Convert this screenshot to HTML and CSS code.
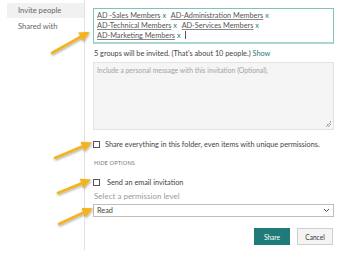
FILE: index.html
```html
<!DOCTYPE html>
<html lang="en">
<head>
  <meta charset="UTF-8">
  <title>Share - Invite people</title>
  <link rel="stylesheet" href="styles.css">
</head>
<body>
  <div class="share-dialog">
    <nav class="side-nav">
      <div class="nav-item active">Invite people</div>
      <div class="nav-item">Shared with</div>
    </nav>

    <main class="invite-panel">
      <div class="people-box">
        <span class="tag">AD -Sales Members</span><span class="tag-x">x</span>
        <span class="tag">AD-Administration Members</span><span class="tag-x">x</span><br>
        <span class="tag">AD-Technical Members</span><span class="tag-x">x</span>
        <span class="tag">AD-Services Members</span><span class="tag-x">x</span><br>
        <span class="tag">AD-Marketing Members</span><span class="tag-x">x</span>
        <span class="caret"></span>
      </div>

      <p class="invite-count">5 groups will be invited. (That's about 10 people.) <a href="#">Show</a></p>

      <div class="message-box">
        <span class="placeholder">Include a personal message with this invitation (Optional).</span>
        <span class="grip"></span>
      </div>

      <label class="check-row share-all">
        <span class="box"></span>
        Share everything in this folder, even items with unique permissions.
      </label>

      <div class="hide-options">HIDE OPTIONS</div>

      <label class="check-row email">
        <span class="box"></span>
        Send an email invitation
      </label>

      <div class="perm-label">Select a permission level</div>
      <div class="perm-select">
        <span>Read</span>
        <svg width="7" height="5" viewBox="0 0 7 5"><path d="M1 1 L3.5 3.5 L6 1" fill="none" stroke="#444" stroke-width="1"/></svg>
      </div>

      <div class="actions">
        <button class="btn primary">Share</button>
        <button class="btn">Cancel</button>
      </div>
    </main>

    <!-- callout arrows drawn over the dialog -->
    <svg class="arrows" width="341" height="256" viewBox="0 0 341 256">
      <defs>
        <filter id="shadow" x="-20%" y="-40%" width="140%" height="180%">
          <feDropShadow dx="0.6" dy="1.2" stdDeviation="0.8" flood-color="#000" flood-opacity="0.35"/>
        </filter>
        <marker id="head" markerWidth="4" markerHeight="4" refX="1.5" refY="2" orient="auto" markerUnits="strokeWidth">
          <path d="M0 0 L4 2 L0 4 Z" fill="#f2b31f"/>
        </marker>
      </defs>
      <g stroke="#f2b31f" stroke-width="2.6" stroke-linecap="round" filter="url(#shadow)" marker-end="url(#head)">
        <line x1="52" y1="53" x2="84" y2="35"/>
        <line x1="55" y1="158" x2="86" y2="145"/>
        <line x1="58" y1="193" x2="85" y2="182"/>
        <line x1="59" y1="224" x2="87" y2="211"/>
      </g>
    </svg>
  </div>
</body>
</html>
```

FILE: styles.css
```css
:root {
  --teal: #1e7b78;
  --teal-light: #7fc3bf;
  --text: #444;
  --muted: #9a9a9a;
  --border: #d9d9d9;
}

* {
  box-sizing: border-box;
  margin: 0;
  padding: 0;
}

body {
  font-family: 'Lato', 'Noto Sans', sans-serif;
  font-size: 7.3px;
  color: var(--text);
  background: #fff;
  width: 341px;
  height: 256px;
  overflow: hidden;
}

.share-dialog {
  position: relative;
  display: flex;
  height: 256px;
}

.side-nav {
  width: 85px;
  height: 250px;
  padding-top: 3px;
  border-right: 1px solid #e2e2e2;
}

.nav-item {
  margin-left: 7px;
  padding-left: 11px;
  height: 15px;
  line-height: 15px;
  color: #666;
  font-size: 7.6px;
}

.nav-item.active {
  background: #f1f1f1;
}

.nav-item + .nav-item {
  margin-top: 1px;
}

.invite-panel {
  width: 241px;
  margin-left: 8px;
  padding-top: 8px;
}

.people-box {
  height: 36px;
  padding: 2px 3px;
  border: 1px solid var(--teal-light);
  border-bottom: 2px solid #a9d6d3;
  line-height: 10px;
  font-size: 7.3px;
  white-space: nowrap;
}

.tag {
  color: #555;
  text-decoration: underline;
  text-decoration-color: #888;
}

.tag-x {
  color: var(--teal);
  margin-left: 2px;
  margin-right: 3px;
}

.caret {
  display: inline-block;
  width: 1px;
  height: 8px;
  background: #555;
  vertical-align: -1px;
}

.invite-count {
  margin-top: 3px;
  height: 15px;
  line-height: 13px;
  font-size: 7.3px;
  padding-left: 1px;
}

.invite-count a {
  color: var(--teal);
  text-decoration: none;
}

.message-box {
  position: relative;
  height: 68px;
  background: #f5f5f5;
  border: 1px solid #e3e3e3;
  padding: 3px 3px;
}

.placeholder {
  color: #a3a3a3;
  font-size: 6.8px;
}

.grip {
  position: absolute;
  right: 2px;
  bottom: 2px;
  width: 6px;
  height: 6px;
  background: linear-gradient(135deg, transparent 50%, #aaa 50%, #aaa 60%, transparent 60%, transparent 70%, #aaa 70%, #aaa 80%, transparent 80%);
}

.check-row {
  display: flex;
  align-items: center;
  gap: 5px;
  font-size: 7.3px;
  color: #444;
  height: 10px;
  white-space: nowrap;
}

.box {
  width: 7px;
  height: 7px;
  border: 1px solid #555;
  background: #fff;
  flex: none;
}

.share-all {
  margin-top: 9px;
}

.hide-options {
  margin-top: 10px;
  height: 8px;
  line-height: 8px;
  font-size: 5.6px;
  color: #777;
  letter-spacing: 0.15px;
  padding-left: 1px;
}

.email {
  margin-top: 10px;
  gap: 7px;
}

.perm-label {
  margin-top: 3px;
  font-size: 8px;
  color: var(--muted);
  height: 12px;
  line-height: 12px;
  padding-left: 1px;
}

.perm-select {
  margin-top: 2px;
  height: 13px;
  border: 1px solid #bdbdbd;
  display: flex;
  align-items: center;
  justify-content: space-between;
  padding: 0 3px;
  font-size: 7.3px;
}

.actions {
  display: flex;
  justify-content: flex-end;
  gap: 7px;
  margin-top: 11px;
  margin-right: 1px;
}

.btn {
  font-family: inherit;
  font-size: 6.6px;
  height: 17px;
  width: 36px;
  border: 1px solid #cfcfcf;
  background: #f4f4f4;
  color: #333;
}

.btn.primary {
  background: var(--teal);
  border-color: var(--teal);
  color: #fff;
}

.arrows {
  position: absolute;
  left: 0;
  top: 0;
  pointer-events: none;
}
```
